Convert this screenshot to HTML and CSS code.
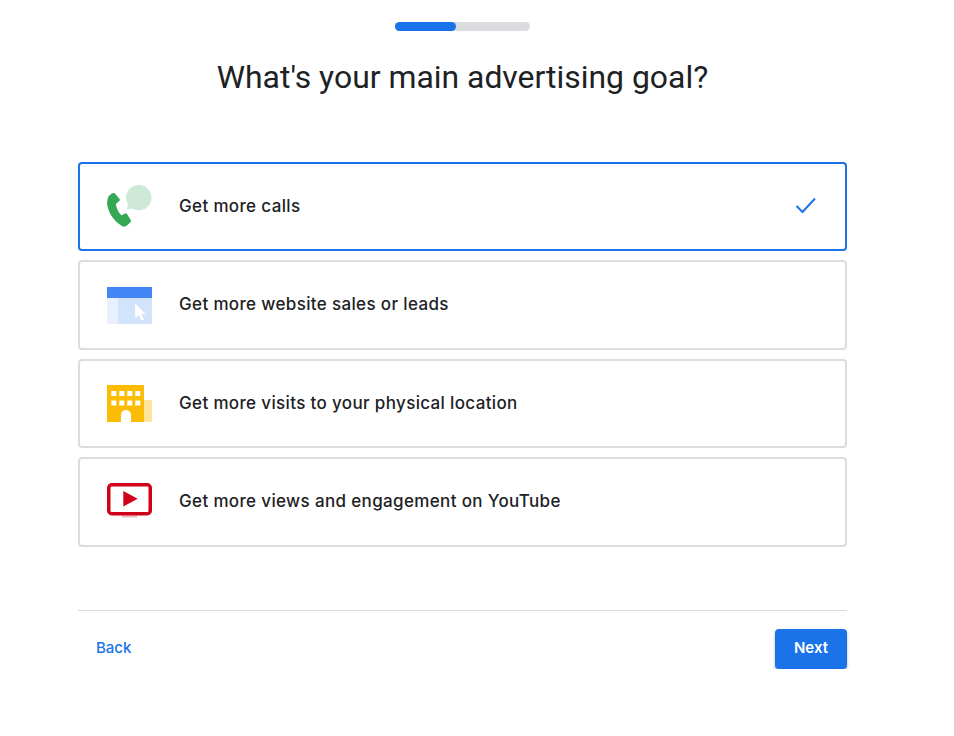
FILE: index.html
```html
<!DOCTYPE html>
<html lang="en">
<head>
    <meta charset="utf-8">
    <title>What's your main advertising goal?</title>
    <link rel="stylesheet" href="styles.css">
</head>
<body>
    <main class="wizard">
        <div class="progress"><div class="progress-fill"></div></div>
        <h1 class="title">What's your main advertising goal?</h1>

        <div class="goals">
            <div class="goal goal-selected">
                <svg class="goal-icon" width="45" height="45" viewBox="0 0 45 45">
                    <path fill="#cfe9d9" d="M31.7 1A12.7 12.7 0 1 1 25 24.400L20 25.500l.9-5.200A12.700 12.700 0 0 1 31.700 1z"/>
                    <path fill="#34a853" d="M1.500 12.500C2.500 11 4.500 9.500 6.300 9c1-.2 1.700.3 2.300 1.200L12.500 15c.5.8.4 1.600-.3 2.100l-2.600 2.200c-.6.5-.8 1.100-.6 1.900.8 3.400 2.400 6.600 4.500 9.400.5.6 1.100.8 1.800.4l2.700-1.500c.8-.5 1.500-.3 2 .4l3.700 6c.5.9.3 1.700-.4 2.400-1.500 1.700-3.300 3.300-5.300 4.300-1 .4-2 0-3-.6C7 37 2 30 .3 21.500 0 18.500.3 15 1.500 12.500z"/>
                </svg>
                <span class="goal-label">Get more calls</span>
                <svg class="goal-check" width="22" height="18" viewBox="0 0 22 18">
                    <path fill="none" stroke="#1a73e8" stroke-width="2" d="M1.500 8l6 6L20 .5"/>
                </svg>
            </div>

            <div class="goal">
                <svg class="goal-icon" width="45" height="45" viewBox="0 0 45 45">
                    <rect y="4" width="45" height="11" fill="#4285f4"/>
                    <rect y="15" width="11" height="26" fill="#e8f0fe"/>
                    <rect x="11" y="15" width="34" height="26" fill="#d2e3fc"/>
                    <path fill="#fff" d="M28 20.500l10.500 10.300-4.300.4 2.800 5.300-2.400 1.200-2.700-5.500-3.600 3z"/>
                </svg>
                <span class="goal-label">Get more website sales or leads</span>
            </div>

            <div class="goal">
                <svg class="goal-icon" width="45" height="45" viewBox="0 0 45 45">
                    <rect x="36" y="19" width="9" height="22" fill="#fee39b"/>
                    <rect y="4" width="37" height="37" fill="#fbbc04"/>
                    <path fill="#fff" d="M4.300 10h5v5h-5zM12.300 10h5v5h-5zM20.300 10h5v5h-5zM28.300 10h5v5h-5zM4.300 19.500h5v5h-5zM12.300 19.500h5v5h-5zM20.300 19.500h5v5h-5zM28.300 19.500h5v5h-5z"/>
                    <path fill="#fff" d="M14 41v-7a5 5 0 0 1 10 0v7z"/>
                </svg>
                <span class="goal-label goal-label-low">Get more visits to your physical location</span>
            </div>

            <div class="goal">
                <svg class="goal-icon" width="45" height="45" viewBox="0 0 45 45">
                    <rect x="15" y="36.500" width="15" height="2" fill="#f2b8c0"/>
                    <rect x="1.750" y="5.750" width="41.500" height="29" rx="3" fill="#fff" stroke="#d0021b" stroke-width="3.500"/>
                    <path fill="#d0021b" d="M16.300 12v15.500L30.700 19.800z"/>
                </svg>
                <span class="goal-label">Get more views and engagement on YouTube</span>
            </div>
        </div>

        <footer class="actions">
            <a class="btn-back" href="#">Back</a>
            <button class="btn-next" type="button">Next</button>
        </footer>
    </main>
</body>
</html>
```

FILE: styles.css
```css
body{
    margin: 0;
    background-color: #fff;
    color: #202124;
    font-family: "Roboto", "Liberation Sans", sans-serif;
}
.wizard{
    width: 769px;
    margin-left: 78px;
    padding-top: 22px;
}
.progress{
    width: 135px;
    height: 9px;
    margin: 0 auto;
    border-radius: 5px;
    background-color: #dadce0;
}
.progress-fill{
    width: 61px;
    height: 100%;
    border-radius: 5px;
    background-color: #1a73e8;
}
.title{
    margin: 24px 0 63px;
    font-size: 31.900px;
    line-height: 44px;
    font-weight: 400;
    text-align: center;
}
.goals{
    display: flex;
    flex-direction: column;
    gap: 9px;
}
.goal{
    display: flex;
    align-items: center;
    box-sizing: border-box;
    height: 89.400px;
    padding: 0 28px 0 27px;
    border: 2px solid #dadce0;
    border-radius: 4px;
}
.goal-selected{
    border-color: #1a73e8;
}
.goal-icon{
    flex: none;
    margin-right: 27px;
}
.goal-label{
    flex: 1;
    padding-bottom: 2px;
    font-family: "Inter", "Liberation Sans", sans-serif;
    font-size: 17px;
    font-weight: 500;
    letter-spacing: .35px;
}
.goal-label-low{
    padding-bottom: 0;
}
.goal-check{
    flex: none;
}
.actions{
    display: flex;
    justify-content: space-between;
    align-items: center;
    margin-top: 63.400px;
    padding-top: 18px;
    border-top: 1px solid #dadce0;
}
.btn-back{
    margin-left: 18px;
    padding-bottom: 2px;
    color: #1a73e8;
    font-family: "Inter", "Liberation Sans", sans-serif;
    font-size: 15px;
    font-weight: 500;
    text-decoration: none;
}
.btn-next{
    width: 72px;
    height: 40px;
    padding: 0 0 2px;
    border: 0;
    border-radius: 4px;
    background-color: #1a73e8;
    box-shadow: 0 2px 3px rgba(60, 64, 67, .4);
    color: #fff;
    font-family: "Inter", "Liberation Sans", sans-serif;
    font-size: 15px;
    font-weight: 600;
}
```
